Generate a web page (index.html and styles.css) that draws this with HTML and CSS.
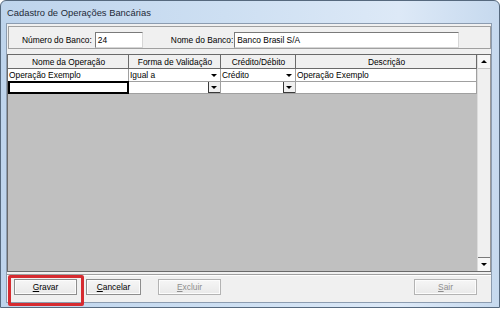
FILE: index.html
```
<!DOCTYPE html>
<html lang="pt-BR">
<head>
  <meta charset="UTF-8">
  <title>Cadastro de Operações Bancárias</title>
  <link rel="stylesheet" href="styles.css">
</head>
<body>
  <div class="window">
    <div class="titlebar">Cadastro de Operações Bancárias</div>

    <div class="client">
      <div class="bank-panel">
        <span class="label">Número do Banco:</span>
        <span class="field field-num">24</span>
        <span class="label label-name">Nome do Banco:</span>
        <span class="field field-name">Banco Brasil S/A</span>
      </div>

      <div class="grid">
        <div class="grid-area">
          <div class="grid-rows">
            <div class="cell head">Nome da Operação</div>
            <div class="cell head">Forma de Validação</div>
            <div class="cell head">Crédito/Débito</div>
            <div class="cell head">Descrição</div>

            <div class="cell">Operação Exemplo</div>
            <div class="cell combo">Igual a<span class="drop"></span></div>
            <div class="cell combo">Crédito<span class="drop"></span></div>
            <div class="cell">Operação Exemplo</div>

            <div class="cell focus"></div>
            <div class="cell combo"><span class="drop pressed"></span></div>
            <div class="cell combo"><span class="drop pressed"></span></div>
            <div class="cell"></div>
          </div>
        </div>
        <div class="vscroll">
          <span class="arrow-btn"><span class="tri-up"></span></span>
          <span class="track"></span>
          <span class="arrow-btn"><span class="tri-down"></span></span>
        </div>
      </div>

      <div class="footer">
        <button class="btn"><u>G</u>ravar</button>
        <button class="btn btn-cancel"><u>C</u>ancelar</button>
        <button class="btn btn-disabled"><u>E</u>xcluir</button>
        <span class="spacer"></span>
        <button class="btn btn-disabled"><u>S</u>air</button>
      </div>
    </div>

    <div class="highlight"></div>
  </div>
</body>
</html>
```

FILE: styles.css
```
body {
  margin: 0;
  background: #fff;
  font-family: "Liberation Sans", Arial, sans-serif;
}

.window {
  position: relative;
  box-sizing: border-box;
  width: 500px;
  height: 308px;
  padding: 0 7px 4px 5px;
  border: 1px solid #56697e;
  border-radius: 6px 6px 0 0;
  background: linear-gradient(to right, #bed4ec 0%, #cddff2 45%, #dde9f7 80%, #c6d9ee 100%);
  display: flex;
  flex-direction: column;
}

.titlebar {
  height: 22px;
  line-height: 24px;
  padding-left: 1px;
  font-size: 9.4px;
  color: #1e2a38;
}

.client {
  flex: 1;
  border: 1px solid #8c9cb0;
  background: #f0f0f0;
  display: flex;
  flex-direction: column;
  font-size: 8.4px;
  color: #000;
}

/* cabeçalho com os dados do banco */
.bank-panel {
  margin: 2px 0 0 1px;
  height: 21px;
  border: 1px solid #a0a0a0;
  display: flex;
  align-items: flex-end;
  padding: 0 0 0 13px;
}

.label {
  margin-bottom: 3px;
}

.label-name {
  margin-left: 28px;
}

.field {
  box-sizing: border-box;
  height: 16px;
  margin-left: 3px;
  padding: 2px 0 0 2px;
  background: #fff;
  border: 1px solid #7a7a7a;
  border-right-color: #d6d6d6;
  border-bottom-color: #d6d6d6;
}

.field-num {
  width: 48px;
}

.field-name {
  width: 225px;
  margin-left: 1px;
}

/* grade de operações */
.grid {
  flex: 1;
  margin-top: 5px;
  border: 1px solid #6a6a6a;
  border-right: none;
  display: flex;
  margin-left: 0;
  margin-bottom: 2px;
}

.grid-area {
  flex: 1;
  background: #c0c0c0;
}

.grid-rows {
  display: grid;
  grid-template-columns: 121px 92px 75px 1fr;
  grid-template-rows: 14px 13px 12px;
  background: #fff;
}

.cell {
  position: relative;
  border-right: 1px solid #a0a0a0;
  border-bottom: 1px solid #a0a0a0;
  padding-left: 1px;
  line-height: 13px;
  white-space: nowrap;
  overflow: hidden;
}

.cell.head {
  background: #f0f0f0;
  border-color: #6a6a6a;
  text-align: center;
  line-height: 14px;
}

.cell.focus {
  border: 2px solid #000;
  margin: -1px 0 0 0;
}

.drop {
  position: absolute;
  right: 0;
  top: 0;
  width: 12px;
  height: 12px;
  background: #fff;
  box-sizing: border-box;
}

.drop::after {
  content: "";
  position: absolute;
  left: 3px;
  top: 5px;
  border-left: 3px solid transparent;
  border-right: 3px solid transparent;
  border-top: 3px solid #000;
}

.drop.pressed {
  height: 11px;
  border-left: 1px solid #3a3a3a;
  border-bottom: 1px solid #3a3a3a;
  background: #f0f0f0;
}

.drop.pressed::after {
  left: 2px;
  top: 4px;
}

/* barra de rolagem vertical */
.vscroll {
  width: 12px;
  display: flex;
  flex-direction: column;
  background: #f0f0f0;
  border-left: 1px solid #dcdcdc;
  border-right: 1px solid #9a9a9a;
}

.arrow-btn {
  position: relative;
  height: 13px;
  background: #f7f7f7;
  border-bottom: 1px solid #c8c8c8;
}

.arrow-btn:last-child {
  border-bottom: none;
  border-top: 1px solid #7a7a7a;
}

.track {
  flex: 1;
}

.tri-up,
.tri-down {
  position: absolute;
  left: 3px;
  top: 5px;
  border-left: 3px solid transparent;
  border-right: 3px solid transparent;
}

.tri-up {
  border-bottom: 3px solid #000;
}

.tri-down {
  border-top: 3px solid #000;
}

/* botões */
.footer {
  height: 23px;
  border-top: 1px solid #a0a0a0;
  box-shadow: inset 0 1px 0 #fff;
  display: flex;
  align-items: flex-start;
  padding: 4px 0 0 7px;
  gap: 9px;
}

.btn {
  width: 63px;
  height: 16px;
  padding: 0;
  font-family: "Liberation Sans", Arial, sans-serif;
  font-size: 8.4px;
  color: #000;
  background: linear-gradient(#f6f6f6, #e9e9e9);
  border: 1px solid #8d8d8d;
  box-shadow: inset 0 0 0 1px #fcfcfc;
}

.btn-cancel {
  width: 55px;
  margin-right: 8px;
}

.btn-disabled {
  color: #8e8e8e;
  border-color: #b3b3b3;
}

.spacer {
  flex: 1;
}

.btn:last-child {
  margin-right: 14px;
}

.highlight {
  position: absolute;
  left: 7px;
  top: 274px;
  width: 70px;
  height: 25px;
  border: 3px solid #d62b30;
  border-radius: 2px;
}
```
